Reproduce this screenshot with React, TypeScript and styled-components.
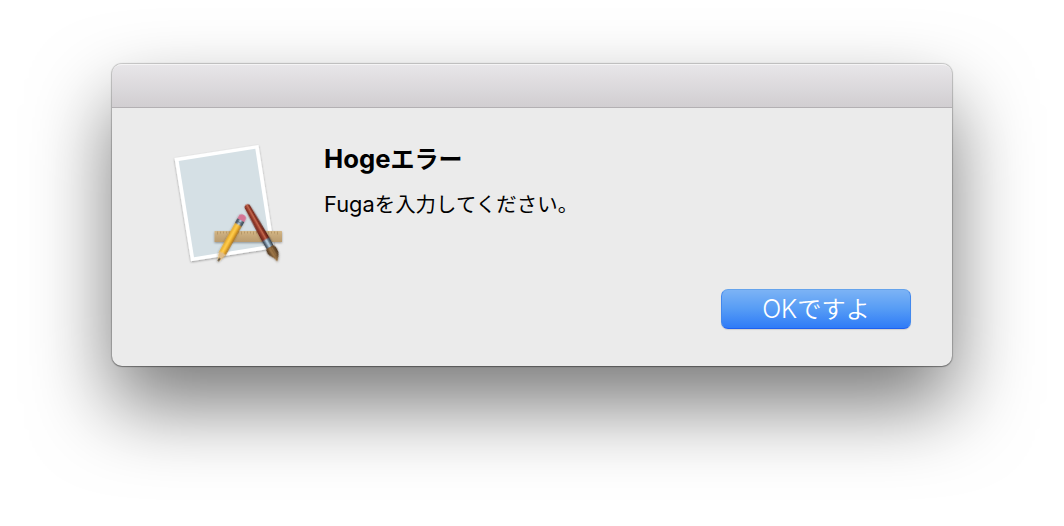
import React from 'react';
import styled, { createGlobalStyle } from 'styled-components';

const GlobalStyle = createGlobalStyle`
  body {
    margin: 0;
    background: #fff;
    overflow: hidden;
    font-family: Inter, "Noto Sans CJK JP", sans-serif;
  }
`

const Desktop = styled.main`
  box-sizing: border-box;
  height: 526px;
  padding: 64px 112px 0;
  overflow: hidden;
`

const Dialog = styled.section`
  display: flex;
  flex-direction: column;
  height: 302px;
  border-radius: 10px;
  background: #ebebeb;
  box-shadow:
    0 0 1px 1px rgba(0, 0, 0, 0.2),
    0 1px 1px rgba(0, 0, 0, 0.25),
    0 39px 80px rgba(0, 0, 0, 0.53);
`

const TitleBar = styled.header`
  box-sizing: border-box;
  height: 44px;
  border-radius: 10px 10px 0 0;
  border-bottom: 1px solid #b3b0b3;
  background: linear-gradient(#e8e6e9, #d1ced1);
  box-shadow: inset 0 2px 0 -1px #f5f4f5;
`

const Content = styled.div`
  display: flex;
  height: 182px;
`

const IconBox = styled.div`
  width: 140px;
  margin: 22px 24px 0 48px;
`

const Message = styled.div`
  padding-top: 36px;
  color: #000;
`

const Heading = styled.h1`
  margin: 0;
  font-size: 25.7px;
  line-height: 30px;
  font-weight: 700;
`

const Description = styled.p`
  margin: 16px 0 0;
  font-size: 21.8px;
  line-height: 28px;
`

const Kana = styled.span<{ $size: number; $spacing?: number }>`
  font-family: "Noto Sans CJK JP", sans-serif;
  font-size: ${({ $size }) => $size}px;
  letter-spacing: ${({ $spacing }) => $spacing || 0}px;
  line-height: 1;
`

const Footer = styled.footer`
  display: flex;
  justify-content: flex-end;
  padding-right: 41px;
`

const Button = styled.button`
  box-sizing: border-box;
  width: 190px;
  height: 40px;
  margin-top: -1px;
  padding: 0 0 1px;
  border: 1px solid;
  border-color: #65a3ec #4288ed #1f60f0;
  border-radius: 7px;
  background: linear-gradient(#7cb3f5, #569cf5 50%, #2f7bf7);
  box-shadow: 0 1px 1px rgba(0, 0, 0, 0.12);
  color: #fff;
  font-family: inherit;
  font-size: 25px;
  font-weight: 350;
  line-height: 36px;
  white-space: nowrap;
`

const AppIcon = () => (
  <svg width="140" height="150" viewBox="0 0 140 150" fill="none">
    <defs>
      <filter id="shadow" x="-20%" y="-20%" width="140%" height="150%">
        <feDropShadow dx="0" dy="1" stdDeviation="1" floodOpacity=".35" />
      </filter>
      <linearGradient id="ruler" x1="0" y1="0" x2="0" y2="1">
        <stop stopColor="#d5b887" />
        <stop offset=".35" stopColor="#c9ab7c" />
        <stop offset="1" stopColor="#b99b6e" />
      </linearGradient>
      <linearGradient id="pencil" x1="0" y1="0" x2="1" y2="0">
        <stop stopColor="#e5a723" />
        <stop offset=".4" stopColor="#ffce51" />
        <stop offset=".65" stopColor="#f0b431" />
        <stop offset="1" stopColor="#a86e16" />
      </linearGradient>
      <linearGradient id="handle" x1="0" y1="0" x2="1" y2="0">
        <stop stopColor="#63221b" />
        <stop offset=".35" stopColor="#963b2a" />
        <stop offset=".55" stopColor="#c66b50" />
        <stop offset=".7" stopColor="#8f3425" />
        <stop offset="1" stopColor="#491812" />
      </linearGradient>
      <linearGradient id="metal" x1="0" y1="0" x2="1" y2="0">
        <stop stopColor="#333b45" />
        <stop offset=".25" stopColor="#627384" />
        <stop offset=".5" stopColor="#c6e1f4" />
        <stop offset=".7" stopColor="#6e8290" />
        <stop offset="1" stopColor="#29323a" />
      </linearGradient>
      <linearGradient id="bristle" x1="0" y1="0" x2="1" y2="0">
        <stop stopColor="#4d3621" />
        <stop offset=".45" stopColor="#9b7344" />
        <stop offset="1" stopColor="#49321d" />
      </linearGradient>
    </defs>
    <g filter="url(#shadow)">
      <path d="M14.5 28 98.5 14.9 114.5 118 31 131.3Z" fill="#fff" />
    </g>
    <path d="M18.7 31 95.3 18.8 110.2 115 34 127.2Z" fill="#d5e0e5" />
    <g filter="url(#shadow)">
      <rect x="54.5" y="101" width="67.5" height="11" rx=".5" fill="url(#ruler)" />
    </g>
    <path d="M57.5 101.5v3M60.5 101.5v2M63.5 101.5v2M66.5 101.5v2M69.5 101.5v3M72.5 101.5v2M75.5 101.5v2M78.5 101.5v2M81.5 101.5v3M84.5 101.5v2M87.5 101.5v2M90.5 101.5v2M93.5 101.5v3M96.5 101.5v2M99.5 101.5v2M102.5 101.5v2M105.5 101.5v3M108.5 101.5v2M111.5 101.5v2M114.5 101.5v2M117.5 101.5v3" stroke="#a58658" strokeWidth=".6" />
    <g filter="url(#shadow)" transform="translate(83.3 85.8) rotate(29)">
      <path d="M-3.7 10H3.7V43L.5 52H-.5L-3.7 43Z" fill="url(#pencil)" />
      <path d="M-3.7 42-1.5 43 0 42 2 43 3.7 42 .7 52H-.7Z" fill="#dfbd8a" />
      <path d="M-1 48.5H1L.5 52H-.5Z" fill="#464139" />
      <rect x="-3.8" y="4.5" width="7.6" height="5.8" fill="url(#metal)" />
      <path d="M-3.8 7.7H3.8" stroke="#495362" strokeWidth=".7" />
      <path d="M-3.8 5V1.8Q-3.7-1 0-1T3.8 1.8V5Z" fill="#d47495" />
    </g>
    <g filter="url(#shadow)" transform="translate(86.4 75) rotate(-29.3)">
      <path d="M-3 2.5Q-2.8-.5 0-.5T3 2.5L4.2 40H-4.2Z" fill="url(#handle)" />
      <path d="M-4.2 39.5H4.2L4 48.5H-4Z" fill="url(#metal)" />
      <path d="M-4 48H4Q5.8 51 5 56Q4 60 -1 64.5Q-.8 61 -3 58Q-6 54 -5.2 51Q-5 49-4 48Z" fill="url(#bristle)" />
      <path d="M-1.5 50-.8 58M1.5 50 1.7 58" stroke="#b5905b" strokeWidth=".6" opacity=".6" />
    </g>
  </svg>
);

const App: React.FC = () => {
  return (
    <Desktop>
      <GlobalStyle />
      <Dialog role="alertdialog">
        <TitleBar />
        <Content>
          <IconBox>
            <AppIcon />
          </IconBox>
          <Message>
            <Heading>Hoge<Kana $size={24}>エラー</Kana></Heading>
            <Description>Fuga<Kana $size={20.4} $spacing={0.1}>を入力してください。</Kana></Description>
          </Message>
        </Content>
        <Footer>
          <Button type="button">OK<Kana $size={24.2}>ですよ</Kana></Button>
        </Footer>
      </Dialog>
    </Desktop>
  );
}

export default App;
